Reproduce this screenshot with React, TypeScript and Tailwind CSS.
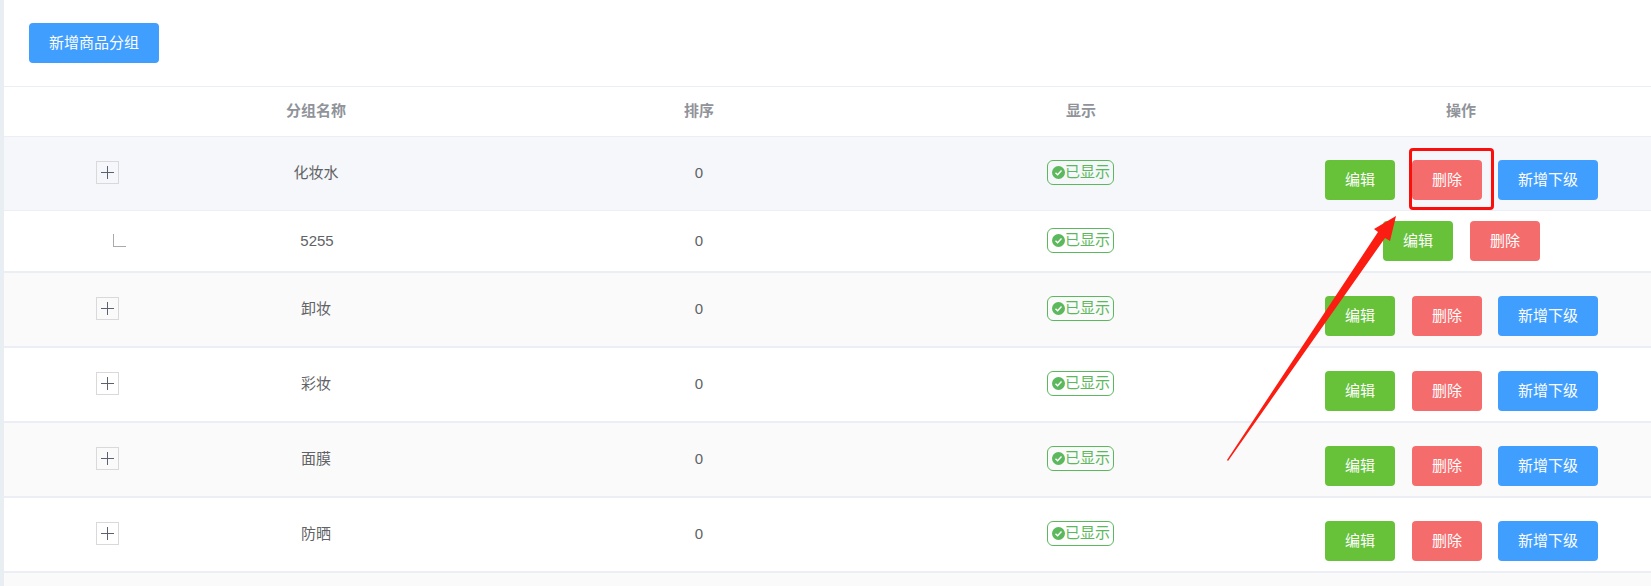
const font = { fontFamily: '"Liberation Sans","Noto Sans CJK SC",sans-serif' };

function Btn({ c, w, children }: { c: string; w: string; children: string }) {
  return <div className={`${c} ${w} h-10 rounded text-white text-[15px] flex items-center justify-center`}>{children}</div>;
}
const Edit = () => <Btn c="bg-[#67c23a]" w="w-[70px]">编辑</Btn>;
const Del = () => <Btn c="bg-[#f56c6c] ml-[17px]" w="w-[70px]">删除</Btn>;
const Add = () => <Btn c="bg-[#409eff] ml-4" w="w-[100px]">新增下级</Btn>;

function Badge() {
  return (
    <div className="w-[67px] h-[25px] -ml-px border border-[#5cb85c] rounded-md flex items-center pl-1 text-[15px] text-[#5cb85c] -translate-y-px">
      <svg width="13" height="13" viewBox="0 0 13 13" className="shrink-0">
        <circle cx="6.5" cy="6.5" r="6.5" fill="#5cb85c" />
        <path d="M3.5 6.8 5.6 8.8 9.5 4.6" fill="none" stroke="#fff" strokeWidth="1.4" />
      </svg>
      <span className="whitespace-nowrap">已显示</span>
    </div>
  );
}

function Row({ name, kind, bg, h, bw }: { name: string; kind: "top" | "sub"; bg: string; h: string; bw: string }) {
  const sub = kind === "sub";
  return (
    <div className={`grid grid-cols-[121px_382px_384px_380px_380px] items-center ${bg} ${h} ${bw} border-[#ebeef5] text-[15px] text-[#606266]`}>
      <div className="pl-[92px] -translate-y-px">
        {sub ? (
          <div className="ml-[17px] w-[13px] h-[13px] border-l border-b border-[#aaaaaa]" />
        ) : (
          <div className="w-[23px] h-[23px] border border-[#d9d9d9] flex items-center justify-center">
            <svg width="13" height="13" viewBox="0 0 13 13"><path d="M6.5 0v13M0 6.5h13" stroke="#5a6270" strokeWidth="1" fill="none" /></svg>
          </div>
        )}
      </div>
      <div className={sub ? "text-center pl-0.5" : "text-center"}>{name}</div>
      <div className="text-center">0</div>
      <div className="flex justify-center"><Badge /></div>
      <div className={sub ? "flex pl-[112px]" : "flex pl-[54px] pt-[13px]"}>
        <Edit />
        <Del />
        {!sub && <Add />}
      </div>
    </div>
  );
}

const rows: [string, "top" | "sub", string, string, string][] = [
  ["化妆水", "top", "bg-[#f5f7fa]", "h-[74px]", "border-b"],
  ["5255", "sub", "bg-white", "h-[62px]", "border-b-2"],
  ["卸妆", "top", "bg-[#fafafa]", "h-[75px]", "border-b-2"],
  ["彩妆", "top", "bg-white", "h-[75px]", "border-b-2"],
  ["面膜", "top", "bg-[#fafafa]", "h-[75px]", "border-b-2"],
  ["防晒", "top", "bg-white", "h-[75px]", "border-b-2"],
];

export default function App() {
  return (
    <div className="relative w-[1651px] h-[586px] overflow-hidden bg-white flex" style={font}>
      <div className="w-1 bg-[#e9eef3] shrink-0" />
      <div className="flex-1 min-w-0">
        <div className="h-[87px] border-b border-[#ebeef5] pt-[23px] pl-[25px]">
          <div className="w-[130px] h-10 bg-[#409eff] rounded text-white text-[15px] flex items-center justify-center">新增商品分组</div>
        </div>
        <div className="grid grid-cols-[121px_382px_384px_380px_380px] items-center h-[50px] border-b border-[#ebeef5] text-[15px] font-bold text-[#909399]">
          <div />
          <div className="text-center">分组名称</div>
          <div className="text-center">排序</div>
          <div className="text-center">显示</div>
          <div className="text-center">操作</div>
        </div>
        {rows.map((r) => (
          <Row key={r[0]} name={r[0]} kind={r[1]} bg={r[2]} h={r[3]} bw={r[4]} />
        ))}
        <div className="h-5 bg-[#fafafa]" />
      </div>
      <div className="absolute left-[1409px] top-[148px] w-[85px] h-[62px] border-[3px] border-[#fb0f0c] rounded-sm" />
      <svg className="absolute left-0 top-0 pointer-events-none" width="1651" height="586">
        <polygon points="1227,460 1378,232 1374,229 1396,216 1390,241 1385,238 1228,461" fill="#fb1d12" />
      </svg>
    </div>
  );
}
